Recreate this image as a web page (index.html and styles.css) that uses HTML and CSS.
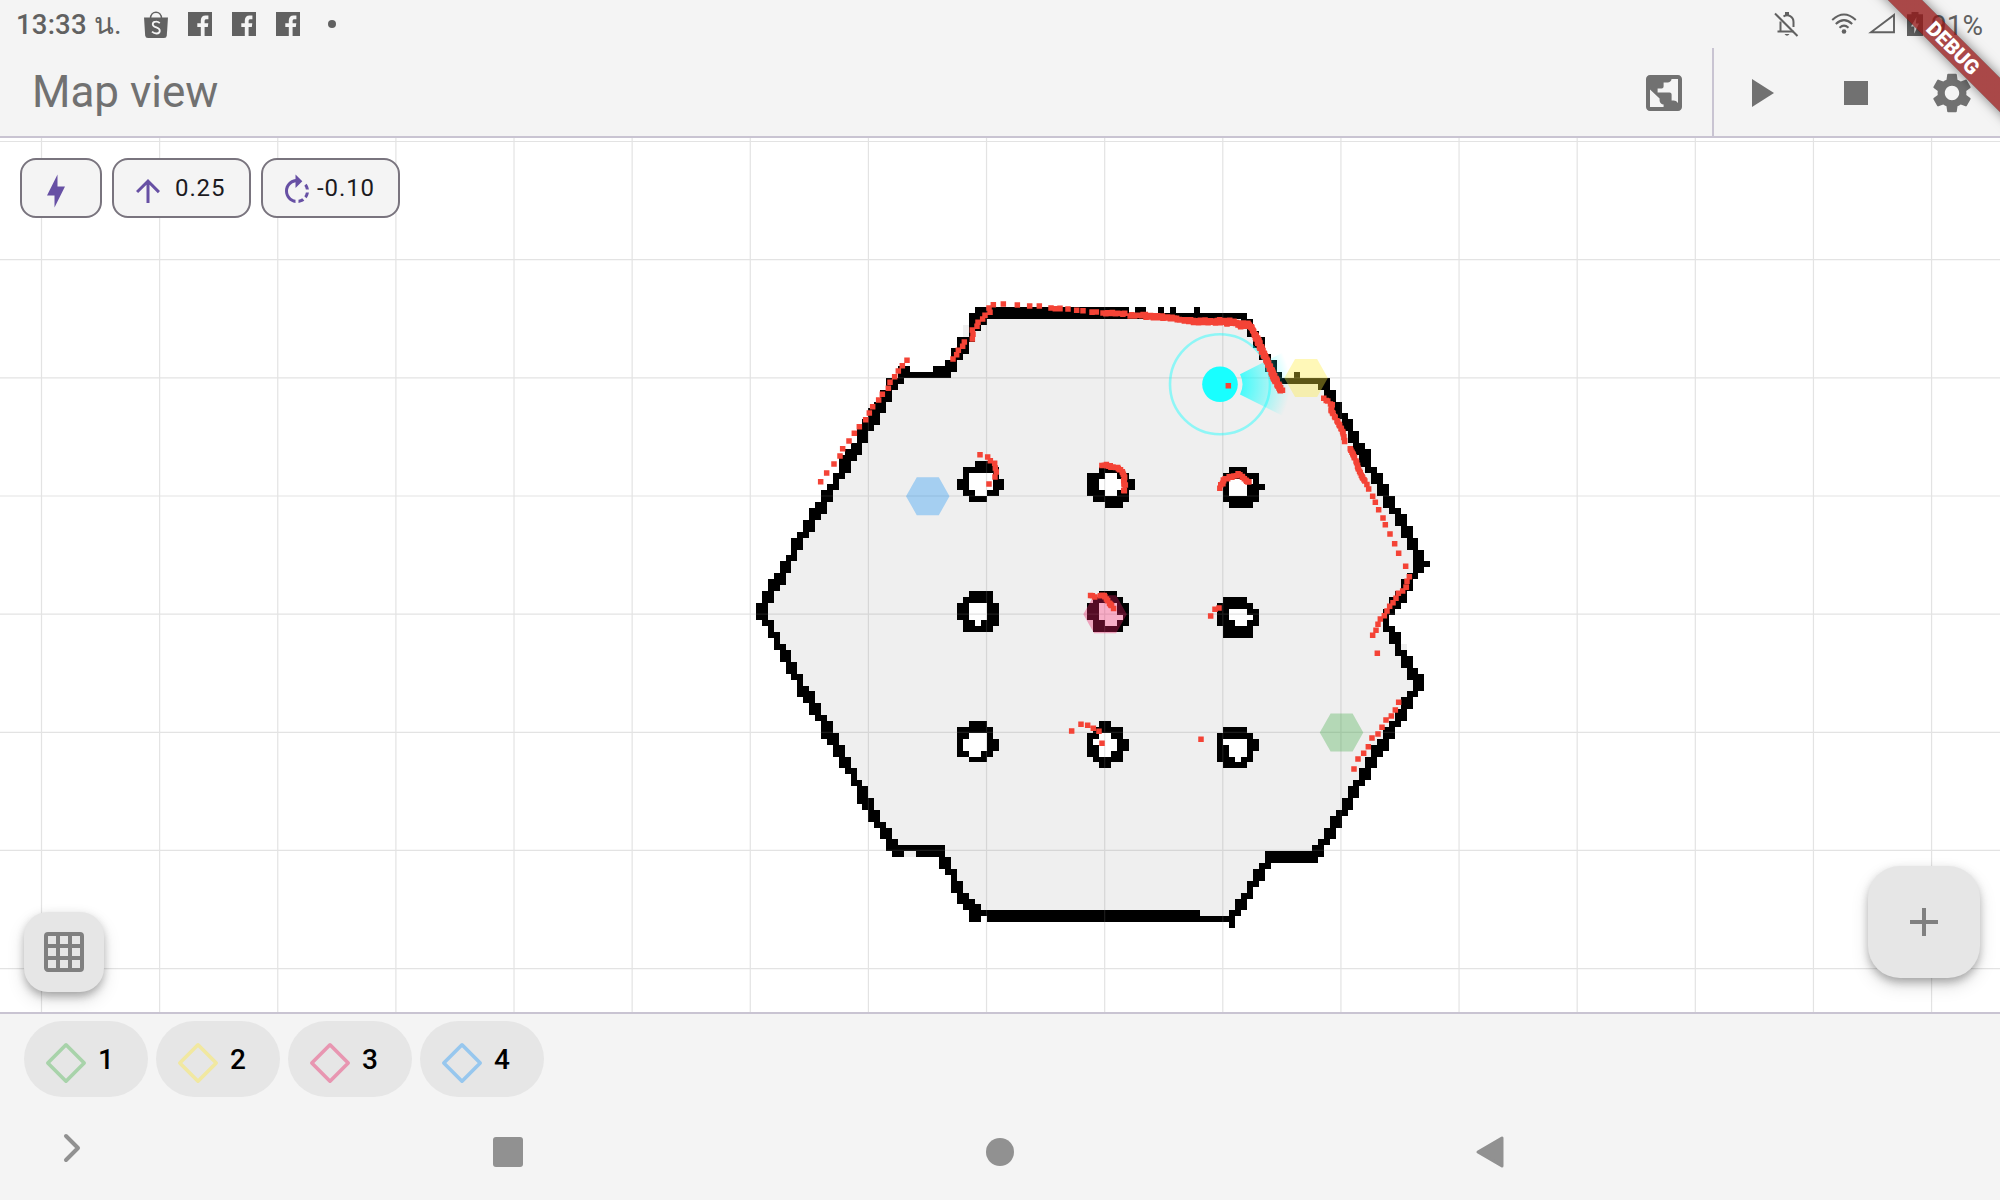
FILE: index.html
```html
<!DOCTYPE html>
<html lang="th">
<head>
<meta charset="utf-8">
<title>Map view</title>
<link rel="stylesheet" href="styles.css">
</head>
<body>
<div class="screen">
  <header class="status">
    <span class="clock">13:33 <span class="thai">น.</span></span>
    <svg class="shop" width="24" height="28" viewBox="0 0 24 28"><path d="M0 6.500h24l-1.200 18q-.2 2.500-2.800 2.500h-16q-2.600 0-2.800-2.500z" fill="#616161"/><path d="M6.500 7.500c0-8.500 11-8.500 11 0" fill="none" stroke="#616161" stroke-width="1.500"/><path d="M15.800 12.200q-1.800-1.700-4-1.500c-3.800.2-4 4-.8 5.200 2.600 1 5 1.600 4.800 4-.3 3.400-5 3.300-7.800.8" fill="none" stroke="#f4f4f4" stroke-width="1.800"/></svg>
    <svg class="fb" width="24" height="24" viewBox="0 0 24 24"><path d="M0 0h24v24h-7.400v-9h3.200l.5-3.700h-3.700V9.200c0-1.400.6-2 2-2h1.800V3.500h-2.800c-3 0-4.800 1.900-4.800 5v2.800H9.300V15h3.500v9H0z"/></svg>
    <svg class="fb" width="24" height="24" viewBox="0 0 24 24"><path d="M0 0h24v24h-7.400v-9h3.200l.5-3.700h-3.700V9.200c0-1.400.6-2 2-2h1.800V3.500h-2.800c-3 0-4.800 1.900-4.800 5v2.800H9.300V15h3.500v9H0z"/></svg>
    <svg class="fb" width="24" height="24" viewBox="0 0 24 24"><path d="M0 0h24v24h-7.400v-9h3.200l.5-3.700h-3.700V9.200c0-1.400.6-2 2-2h1.800V3.500h-2.800c-3 0-4.800 1.900-4.800 5v2.800H9.300V15h3.500v9H0z"/></svg>
    <i class="more"></i>
    <div class="system">
      <svg class="bell" width="25" height="25" viewBox="0 0 25 25"><g fill="none" stroke="#616161" stroke-width="2"><path d="M1 1.500L23.500 24"/><path d="M3.500 19.500h16M6.500 19V9.500M9.500 4.500C14 1.500 19.500 4.500 19.500 10v5"/></g><path d="M11 0h4v4h-4zM10.500 22h5q-2.500 3.500-5 0z" fill="#616161"/></svg>
      <svg class="wifi" width="26" height="22" viewBox="0 0 26 22"><g fill="none" stroke="#616161" stroke-width="2"><path d="M1.200 7Q13-4 24.800 7M4.800 11Q13 3.300 21.200 11M8.500 14.700Q13 10.500 17.500 14.700"/></g><circle cx="13" cy="18.500" r="2.300" fill="#616161"/></svg>
      <svg class="signal" width="27" height="21" viewBox="0 0 27 21"><path d="M3 19.200H26V2z" fill="none" stroke="#616161" stroke-width="1.900"/></svg>
      <svg class="battery" width="16" height="24" viewBox="0 0 16 24"><path fill-rule="evenodd" d="M4.500 0h7v2.300H16V24H0V2.300h4.500zM9.500 5L4 14.500h3.300V21.500L12 11.500H8.800z" fill="#616161"/></svg>
      <span class="percent">91%</span>
    </div>
  </header>

  <div class="appbar">
    <h1 class="title">Map view</h1>
    <div class="globe"><svg width="48" height="48" viewBox="0 0 24 24"><path d="M5 3C3.900 3 3 3.900 3 5V19C3 20.110 3.900 21 5 21H19C20.110 21 21 20.110 21 19V5C21 3.900 20.110 3 19 3H5M15.780 5H19V17.180C18.740 16.380 17.690 15.790 16.800 15.790H15.800V12.790A1 1 0 0 0 14.800 11.790H8.800V9.790H10.800A1 1 0 0 0 11.800 8.790V6.790H13.800C14.830 6.790 15.670 6 15.780 5M5 10.290L9.800 14.790V15.790C9.800 16.900 10.700 17.790 11.800 17.790V19H5V10.290Z"/></svg></div>
    <div class="actions">
      <svg width="48" height="48" viewBox="0 0 24 24"><path d="M8 5v14l11-7z"/></svg>
      <svg width="48" height="48" viewBox="0 0 24 24"><path d="M6 6h12v12H6z"/></svg>
      <svg width="48" height="48" viewBox="0 0 24 24"><path d="M19.140 12.940c.04-.3.06-.61.06-.94 0-.32-.02-.64-.07-.94l2.030-1.580c.18-.14.23-.41.12-.61l-1.920-3.320c-.12-.22-.37-.29-.59-.22l-2.390.96c-.5-.38-1.030-.7-1.620-.94l-.36-2.540c-.04-.24-.24-.41-.48-.41h-3.840c-.24 0-.43.17-.47.41l-.36 2.540c-.59.24-1.130.57-1.620.94l-2.390-.96c-.22-.08-.47 0-.59.22L2.740 8.870c-.12.21-.08.47.12.61l2.030 1.580c-.05.3-.09.63-.09.94s.02.64.07.94l-2.030 1.580c-.18.14-.23.41-.12.61l1.920 3.320c.12.22.37.29.59.22l2.390-.96c.5.38 1.030.7 1.620.94l.36 2.540c.05.24.24.41.48.41h3.840c.24 0 .44-.17.47-.41l.36-2.540c.59-.24 1.130-.56 1.620-.94l2.390.96c.22.08.47 0 .59-.22l1.920-3.320c.12-.22.07-.47-.12-.61l-2.010-1.580zM12 15.600c-1.980 0-3.600-1.620-3.600-3.600s1.620-3.600 3.600-3.600 3.600 1.620 3.600 3.600-1.620 3.600-3.600 3.600z"/></svg>
    </div>
  </div>

  <main class="map">
    <svg class="canvas" width="2000" height="874" viewBox="0 138 2000 874">
      <defs>
        <radialGradient id="beam" gradientUnits="userSpaceOnUse" cx="1220" cy="384.300" r="70">
          <stop offset=".3" stop-color="#18ffff" stop-opacity=".8"/>
          <stop offset="1" stop-color="#18ffff" stop-opacity="0"/>
        </radialGradient>
      </defs>
      <g transform="translate(756 307) scale(5.915)" shape-rendering="crispEdges">
        <path id="floor" fill="#efefef"/>
        <path id="holes" fill="#fff"/>
        <path id="walls" fill="#000"/>
      </g>
      <path id="grid" stroke="#808080" stroke-opacity=".22" stroke-width="1.200" fill="none"/>
      <g fill-opacity=".36">
        <path fill="#2196f3" d="M906 496.200l10.800-19h22l10.700 19-10.700 19h-22z"/>
        <path fill="#ffeb3b" d="M1284.300 378l10.800-19h22l10.700 19-10.700 19h-22z"/>
        <path fill="#e91e63" d="M1083.300 614.300l10.800-19h22l10.700 19-10.700 19h-22z"/>
        <path fill="#4caf50" d="M1319.800 732.400l10.800-19h22l10.700 19-10.700 19h-22z"/>
      </g>
      <path fill="url(#beam)" d="M1240 374.200L1282.500 352.800A70 70 0 0 1 1282.500 415.800L1240 394.400A22.400 22.400 0 0 0 1240 374.200Z"/>
      <circle cx="1220" cy="384.300" r="50" fill="none" stroke="#18ffff" stroke-opacity=".45" stroke-width="2.600"/>
      <circle cx="1220" cy="384.300" r="17.800" fill="#18ffff"/>
      <path id="scan" fill="#f44336"/>
    </svg>
    <div class="readings">
      <div class="reading bolt"><svg width="36" height="36" viewBox="0 0 24 24"><path d="M11 15H6L13 1V9H18L11 23V15Z"/></svg></div>
      <div class="reading"><svg width="36" height="36" viewBox="0 0 24 24"><path d="M4 12l1.410 1.410L11 7.830V20h2V7.830l5.580 5.590L20 12l-8-8-8 8z"/></svg><span class="linear">0.25</span></div>
      <div class="reading"><svg width="36" height="36" viewBox="0 0 24 24"><path d="M15.550 5.550L11 1v3.070C7.060 4.560 4 7.920 4 12s3.050 7.440 7 7.930v-2.020c-2.840-.48-5-2.940-5-5.910s2.160-5.430 5-5.910V10l4.550-4.450zM19.930 11c-.17-1.390-.72-2.730-1.620-3.890l-1.420 1.420c.54.75.88 1.600 1.020 2.470h2.020zM13 17.900v2.020c1.390-.17 2.740-.71 3.900-1.610l-1.440-1.440c-.75.54-1.590.89-2.460 1.030zm3.890-2.420l1.420 1.410c.9-1.160 1.450-2.500 1.620-3.890h-2.020c-.14.87-.48 1.720-1.020 2.480z"/></svg><span class="angular">-0.10</span></div>
    </div>
    <div class="fab fab-grid"><svg width="48" height="48" viewBox="0 0 24 24"><path d="M10 4V8H14V4H10M16 4V8H20V4H16M16 10V14H20V10H16M16 16V20H20V16H16M14 20V16H10V20H14M8 20V16H4V20H8M8 14V10H4V14H8M8 8V4H4V8H8M10 14H14V10H10V14M4 2H20A2 2 0 0 1 22 4V20A2 2 0 0 1 20 22H4C2.920 22 2 21.100 2 20V4A2 2 0 0 1 4 2Z"/></svg></div>
    <div class="fab fab-add"><svg width="48" height="48" viewBox="0 0 24 24"><path d="M19 13h-6v6h-2v-6H5v-2h6V5h2v6h6v2z"/></svg></div>
  </main>

  <div class="tags">
    <div class="tag green"><svg width="48" height="48" viewBox="0 0 24 24"><path d="M12 2.900L21.100 12L12 21.100L2.900 12Z"/></svg>1</div>
    <div class="tag yellow"><svg width="48" height="48" viewBox="0 0 24 24"><path d="M12 2.900L21.100 12L12 21.100L2.900 12Z"/></svg>2</div>
    <div class="tag pink"><svg width="48" height="48" viewBox="0 0 24 24"><path d="M12 2.900L21.100 12L12 21.100L2.900 12Z"/></svg>3</div>
    <div class="tag blue"><svg width="48" height="48" viewBox="0 0 24 24"><path d="M12 2.900L21.100 12L12 21.100L2.900 12Z"/></svg>4</div>
  </div>

  <nav class="nav">
    <svg class="chevron" width="18" height="30" viewBox="0 0 18 30"><path d="M3 3L15 15L3 27" fill="none" stroke="#919191" stroke-width="4" stroke-linecap="round" stroke-linejoin="round"/></svg>
    <i class="recent"></i>
    <i class="home"></i>
    <svg class="back" width="30" height="34" viewBox="0 0 30 34"><path d="M3 17L27 3V31Z" fill="#919191" stroke="#919191" stroke-width="3" stroke-linejoin="round"/></svg>
  </nav>
  <div class="ribbon-clip"><div class="ribbon">DEBUG</div></div>
</div>
<script src="map.js"></script>
</body>
</html>
```
FILE: styles.css
```css
* { box-sizing: border-box; }
body { margin: 0; font-family: Roboto, "Noto Sans", sans-serif; background: #f4f4f4; }
svg { display: block; flex: none; }
.screen { position: relative; width: 2000px; height: 1200px; display: flex; flex-direction: column; overflow: hidden; }

.status { height: 48px; flex: none; display: flex; align-items: flex-start; padding-left: 16px; color: #616161; }
.clock { width: 128px; font-size: 27.500px; font-weight: 500; line-height: 32px; padding-top: 9px; white-space: nowrap; letter-spacing: .2px; }
.thai { font-weight: 400; font-size: 29px; line-height: 1; }
.shop { margin-top: 11px; }
.fb { margin: 12px 0 0 20px; fill: #616161; }
.more { width: 8px; height: 8px; margin: 20px 0 0 28px; border-radius: 50%; background: #616161; }
.system { margin-left: auto; width: 226px; display: flex; align-items: flex-start; }
.bell { margin-top: 12px; }
.wifi { margin: 13px 0 0 32px; }
.signal { margin: 13px 0 0 11px; }
.battery { margin: 12px 0 0 12px; }
.percent { margin-left: 8px; padding-top: 10px; font-size: 28px; line-height: 32px; }

.appbar { height: 90px; flex: none; display: flex; border-bottom: 2px solid #c9c4d2; }
.title { margin: 0; padding: 18px 0 0 32px; font-size: 44px; line-height: 52px; font-weight: 400; color: #717171; }
.appbar svg { fill: #717171; }
.globe { margin-left: auto; padding: 21px 24px 0 0; }
.actions { width: 288px; display: flex; gap: 48px; padding: 21px 0 0 22px; border-left: 2px solid #c9c4d2; }

.map { position: relative; height: 874px; flex: none; background: #fff; overflow: hidden; }
.readings { position: absolute; left: 20px; top: 20px; display: flex; gap: 10px; }
.reading { width: 139px; height: 60px; display: flex; align-items: flex-start; padding: 13px 0 0 16px; border: 2px solid #79747e; border-radius: 16px; background: #f4f4f4; font-size: 24px; line-height: 28px; color: #1c1b1f; letter-spacing: .9px; }
.reading svg { fill: #6750a4; }
.reading.bolt { width: 82px; }
.linear { margin: 1px 0 0 9px; }
.angular { margin: 1px 0 0 2px; }
.fab { position: absolute; display: flex; align-items: center; justify-content: center; background: #e6e6e6; box-shadow: 0 6px 10px -2px rgba(0,0,0,.22), 0 8px 18px rgba(0,0,0,.13), 0 2px 10px rgba(0,0,0,.1); }
.fab svg { fill: #808080; }
.fab-grid { left: 24px; top: 774px; width: 80px; height: 80px; border-radius: 24px; }
.fab-add { left: 1868px; top: 728px; width: 112px; height: 112px; border-radius: 32px; }

.tags { height: 92px; flex: none; display: flex; gap: 8px; padding: 7px 24px 0; border-top: 2px solid #c9c4d2; }
.tag { width: 124px; height: 76px; display: flex; gap: 8px; padding: 19px 0 0 18px; border-radius: 38px; background: #e6e6e6; font-size: 28px; line-height: 40px; font-weight: 500; color: #000; }
.tag path { fill: none; stroke-width: 1.8; stroke-linejoin: round; }
.tag svg { margin-top: -1px; }
.green path { stroke: #a8d3aa; }
.yellow path { stroke: #f1e8a0; }
.pink path { stroke: #e896b1; }
.blue path { stroke: #97c7ee; }

.nav { height: 96px; flex: none; display: flex; align-items: flex-start; }
.chevron { margin: 29px 0 0 63px; }
.recent { width: 30px; height: 30px; margin: 33px 0 0 412px; border-radius: 3px; background: #919191; }
.home { width: 28px; height: 28px; margin: 34px 0 0 463px; border-radius: 50%; background: #919191; }
.back { margin: 31px 0 0 461px; }

.ribbon-clip { position: absolute; right: 0; top: 0; width: 160px; height: 160px; overflow: hidden; }
.ribbon { position: absolute; left: 12.500px; top: 36px; width: 200px; height: 24px; transform: rotate(45deg); background: linear-gradient(rgba(183,28,28,.627), rgba(183,28,28,.627)), rgba(0,0,0,.4); box-shadow: 0 0 12px rgba(0,0,0,.5); color: #fff; font-size: 20.400px; line-height: 24px; font-weight: 900; text-align: center; }
```
FILE: map.js
```javascript
// Outer wall, one entry per occupancy row: [left start, left end, right start, right end]
const outline = [
  [37,63,63,63],[36,83,83,83],[36,39,82,84],[36,38,83,84],[36,37,83,85],[34,37,84,86],[34,36,84,86],[33,36,85,86],
  [33,35,85,87],[32,34,86,88],[30,34,86,88],[24,33,87,89],[22,25,88,97],[22,24,95,97],[21,23,96,98],[21,23,96,98],
  [20,22,97,99],[19,22,97,99],[19,21,98,100],[18,21,99,101],[17,20,99,101],[17,19,100,102],[17,19,100,102],[16,18,101,103],
  [15,18,101,104],[14,17,102,104],[14,16,102,104],[14,16,103,105],[13,15,104,106],[13,14,104,106],[12,14,105,107],[11,13,105,107],
  [11,13,106,108],[10,12,106,108],[9,12,107,109],[9,11,108,110],[8,10,108,110],[8,10,109,111],[7,9,109,111],[6,8,110,112],
  [6,8,110,112],[6,7,111,113],[5,7,111,113],[4,6,111,114],[4,6,111,113],[3,5,110,112],[2,5,109,111],[2,4,109,111],
  [1,3,108,110],[1,3,107,110],[0,2,107,109],[0,2,106,108],[0,2,106,107],[1,3,106,107],[2,3,106,108],[2,4,107,109],
  [3,4,107,109],[3,5,108,109],[4,6,108,110],[4,6,109,111],[5,7,109,111],[5,7,110,112],[6,8,110,113],[7,8,111,113],
  [7,9,111,113],[7,10,110,112],[8,10,109,111],[9,11,109,111],[9,11,108,110],[10,12,108,110],[11,13,107,109],[11,13,106,108],
  [11,14,106,108],[12,14,105,107],[13,15,104,107],[13,15,104,106],[14,16,103,105],[14,16,103,105],[15,17,102,104],[16,17,102,104],
  [16,18,101,103],[17,19,100,102],[17,19,100,102],[17,20,99,101],[18,20,99,101],[19,21,98,100],[19,21,97,99],[20,22,97,99],
  [21,23,96,98],[21,23,96,98],[22,24,95,97],[22,32,94,96],[27,32,86,96],[31,33,86,95],[31,33,85,87],[32,34,84,86],
  [33,34,84,86],[33,35,83,85],[33,35,83,84],[34,36,82,84],[34,37,81,83],[35,38,81,83],[36,75,80,82],[39,81,81,81],[80,81,81,81]
];
// Stray occupied cells: [row, start, end]
const extra = [[0,64,66],[0,68,69],[0,70,71],[0,74,75],[10,24,26],[11,91,92],[92,23,25],[103,36,38]];
// Pillars: top row, then [start, hole start, hole end, end]
const pillars = [
  [26,[37,0,0,40],[35,0,0,41],[35,36,40,41],[34,36,40,42],[34,36,40,42],[35,37,39,41],[36,0,0,39]],
  [48,[36,0,0,40],[35,0,0,40],[34,36,39,41],[34,36,39,41],[34,36,39,41],[35,37,38,41],[35,0,0,40]],
  [70,[36,0,0,39],[34,0,0,40],[34,36,39,40],[34,35,39,41],[34,35,39,41],[34,36,38,40],[36,0,0,39]],
  [27,[58,0,0,62],[56,59,61,63],[56,58,62,64],[56,58,62,64],[56,59,61,63],[57,0,0,63],[59,0,0,62]],
  [48,[58,0,0,61],[57,0,0,62],[56,58,61,63],[56,58,61,63],[56,58,62,63],[57,59,61,63],[57,0,0,62]],
  [70,[58,0,0,60],[57,0,0,62],[56,58,60,62],[56,57,61,63],[56,58,61,63],[56,58,60,62],[57,0,0,62],[58,0,0,60]],
  [27,[80,0,0,83],[79,0,0,85],[79,80,84,85],[79,80,83,86],[79,80,83,85],[79,0,0,85],[80,0,0,84]],
  [49,[79,0,0,83],[78,0,0,84],[78,80,83,85],[78,80,84,85],[78,81,83,85],[79,0,0,84],[79,0,0,84]],
  [71,[79,0,0,83],[78,0,0,84],[78,79,83,85],[78,80,83,85],[78,80,83,84],[78,81,82,84],[79,0,0,83]]
];
const run = (row, a, b) => b > a ? `M${a} ${row}H${b}v1H${a}z` : '';
let walls = '', floor = '', holes = '';
outline.forEach(([a, b, c, d], r) => { walls += run(r, a, b) + run(r, c, d); floor += run(r, b, c); });
extra.forEach(([r, a, b]) => { walls += run(r, a, b); });
pillars.forEach(([top, ...rows]) => rows.forEach(([a, h, k, b], i) => {
  if (k) { walls += run(top + i, a, h) + run(top + i, k, b); holes += run(top + i, h, k); }
  else walls += run(top + i, a, b);
}));
floor += run(3, 35, 36) + run(4, 35, 36) + run(92, 25, 27) + run(57, 109, 110);
document.getElementById('walls').setAttribute('d', walls);
document.getElementById('floor').setAttribute('d', floor);
document.getElementById('holes').setAttribute('d', holes);

let grid = '';
for (let i = 0; i < 17; i++) grid += `M${41.5 + 118.13 * i} 138V1012`;
for (let i = 0; i < 8; i++) grid += `M0 ${141.5 + 118.16 * i}H2000`;
document.getElementById('grid').setAttribute('d', grid);

// Lidar returns, in thirds of a pixel from each origin
const dots = [
  [740,290,[242,575,260,549,282,522,300,498,308,476,327,453,343,430,358,410,377,389,388,369,398,350,416,330,427,313,445,295,450,277,464,260,475,243,487,227,501,211,
    639,207,650,194,655,181,668,169,673,156,697,147,699,133,697,120,711,109,714,97,728,87,735,76,750,67,747,54,760,44,790,42,832,45,869,48,898,48,933,54,960,55,984,57,1010,61,1029,62,1056,67,1069,66,
    720,494,743,501,751,512,764,520,766,534,769,546,765,561,747,582]],
  [1060,290,[-14,56,0,56,24,57,50,61,69,62,97,66,108,66,505,287,926,597,938,619,946,637,956,659,969,684,976,704,990,732,1004,761,1016,790,1037,829,1048,860,1041,874,1039,891,452,978,465,958,477,954]],
  [740,590,[995,423,1023,403,1043,406,1060,415,1077,424]],
  [1060,540,[126,610,423,598,952,340,938,286,948,271,954,253,961,237,973,227,981,213,989,199,999,188,1008,175,1015,160,1028,153,1038,142,1016,487,1006,510,994,528,978,540,966,562,954,582,936,594,925,620,911,640,894,657,882,687]]
];
// Dense traces: consecutive vertices joined by closely spaced returns
const traces = [
  [129,69,195,71],[210,77,250,75,330,82,365,90,400,92,480,93,500,100,520,98,541,108,565,107,575,112,586,142,600,175,620,215,640,265,660,300,667,300],
  [250,80,330,84,400,96,480,97],[480,92,510,92,530,98,565,102,572,110,596,150,617,200,638,245,650,270,665,299],[792,326,817,345],
  [813,360,837,403,848,425,855,457],[870,475,879,493,890,518,895,536,907,562,920,582],
  [126,527,140,525,152,530,174,534,187,546,193,560,192,582,196,585],[192,600,192,603],[479,594,488,580,490,570,515,560,535,553,547,560,559,572,568,578],
  [91,915,104,921],[120,915,134,919,143,932,152,944,160,954],[817,345,813,360]
];
let scan = '';
const dot = (x, y) => { scan += `M${(x - 2.75).toFixed(2)} ${(y - 2.75).toFixed(2)}h5.5v5.5h-5.5z`; };
dots.forEach(([ox, oy, p]) => { for (let i = 0; i < p.length; i += 2) dot(ox + p[i] / 3, oy + p[i + 1] / 3); });
// Small alternating range noise keeps the dense traces ragged
const noise = [0, .7, -.5, .3, -.8, .5, -.2];
let step = 0;
traces.forEach(p => {
  for (let i = 0; i + 3 < p.length; i += 2) {
    const dx = p[i + 2] - p[i], dy = p[i + 3] - p[i + 1], n = Math.max(1, Math.round(Math.hypot(dx, dy) / 7));
    for (let k = 0; k <= n; k++) {
      const e = noise[step++ % noise.length];
      dot(1060 + (p[i] + dx * k / n) / 3 + e * .5, 290 + (p[i + 1] + dy * k / n) / 3 + e);
    }
  }
});
document.getElementById('scan').setAttribute('d', scan);
```
